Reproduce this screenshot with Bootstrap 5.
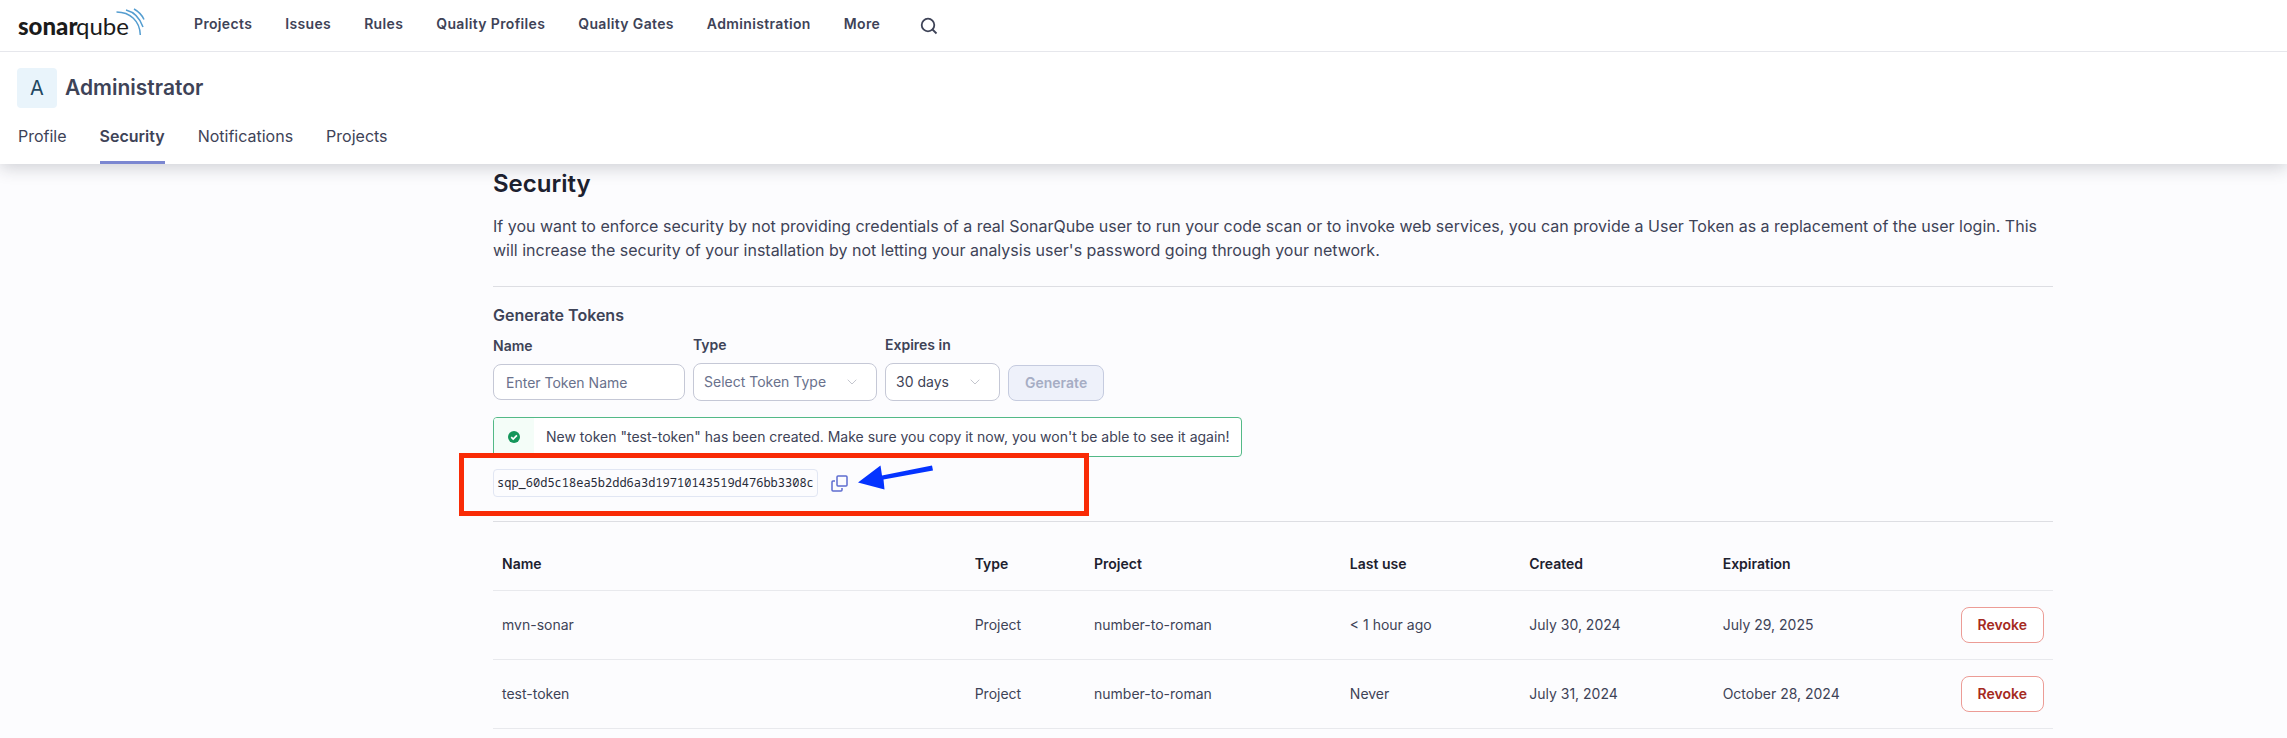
<!DOCTYPE html>
<html lang="en">
<head>
<meta charset="utf-8">
<meta name="viewport" content="width=device-width, initial-scale=1">
<title>Security - Administrator</title>
<link href="https://cdn.jsdelivr.net/npm/bootstrap@5.3.0/dist/css/bootstrap.min.css" rel="stylesheet">
<style>
  body { font-family: Inter, "Liberation Sans", sans-serif; font-size: 14px; line-height: 20px; color: #3e4357; background: #fcfcfe; }
  a { color: inherit; text-decoration: none; }
  .top-bar { height: 52px; background: #fff; border-bottom: 1px solid #e6e7ec; padding: 0 18px; position: relative; z-index: 2; }
  .brand-logo { width: 128px; height: 36px; margin-right: 48px; }
  .main-menu { gap: 33px; font-weight: 600; letter-spacing: .025em; padding-bottom: 4px; }
  .search-btn { margin-left: 40px; }
  .account-head { background: #fff; padding: 16px 17px 0; box-shadow: 0 4px 16px rgba(30,33,50,.2); position: relative; z-index: 1; }
  .avatar-box { width: 40px; height: 40px; border-radius: 4px; background: #e9f4fb; color: #1f4760; font-size: 20px; }
  .account-name { font-size: 21px; line-height: 28px; font-weight: 600; }
  .account-tabs { gap: 33px; font-size: 16px; line-height: 24px; margin-top: 16px; padding-left: 1px; }
  .account-tabs a { height: 40px; border-bottom: 3px solid transparent; display: block; }
  .account-tabs a.active { font-weight: 600; border-color: #7b87d1; }
  .page-grid { display: grid; grid-template-columns: minmax(0,493fr) minmax(0,1560fr) minmax(0,234fr); }
  .page-body { grid-column: 2; padding-top: 4px; }
  .page-title { font-size: 24px; line-height: 32px; font-weight: 600; color: #1d212f; margin: 0 0 14px; }
  .intro { font-size: 16px; line-height: 24px; margin: 0 0 24px; }
  .rule { height: 1px; background: #dddee3; }
  .form-title { font-size: 16px; line-height: 24px; font-weight: 600; margin: 16px 0 8px; }
  .token-form { gap: 8px; }
  .token-form label { display: block; font-weight: 600; margin-bottom: 8px; }
  .field { display: block; height: 38px; border: 1px solid #c5c8d6; border-radius: 8px; background-color: #fff; color: #3e4357; outline: none; padding: 0 10px; }
  input.field { width: 192px; height: 36px; padding: 0 12px; }
  .field::placeholder { color: #69718c; opacity: 1; }
  select.field { appearance: none; background-repeat: no-repeat; background-position: right 19px center;
    background-image: url("data:image/svg+xml,%3Csvg xmlns='http://www.w3.org/2000/svg' width='10' height='6'%3E%3Cpath d='M.7.7 5 5 9.300.7' fill='none' stroke='%23c4c6ce'/%3E%3C/svg%3E"); }
  .pick-type { width: 184px; }
  select.pick-type { color: #69718c; }
  .pick-days { width: 115px; }
  .btn-act { font-size: 14px; line-height: 20px; font-weight: 600; height: 36px; padding: 0 16px; border-radius: 8px; }
  .btn-make, .btn-make:disabled { color: #a6adc4; background: #eef1fa; border-color: #c5cbdf; opacity: 1; }
  .btn-revoke { color: #a52a21; background: #fff; border-color: #ec9c96; }
  .notice { display: inline-flex; height: 40px; margin-top: 16px; border: 1px solid #53b987; border-radius: 4px; background: #fff; overflow: hidden; padding-right: 11px; }
  .notice-mark { width: 40px; background: #f4fdf8; margin-right: 12px; }
  .token-row { position: relative; height: 28px; margin: 12px 0 24px; gap: 13px; }
  .token-code { font-family: "Noto Sans Mono", "DejaVu Sans Mono", monospace; font-size: 12px; line-height: 26px; color: #272b38; border: 1px solid #e1e6f3; border-radius: 4px; padding: 0 3px; }
  .mark-box { position: absolute; left: -34px; top: -16px; width: 630px; height: 63px; border: 5px solid #f92b06; pointer-events: none; }
  .mark-arrow { position: absolute; left: 365px; top: -5px; pointer-events: none; }
  .token-table { width: 100%; table-layout: fixed; }
  .token-table th { height: 68px; padding: 16px 9px 0; font-weight: 600; color: #1d212f; border-bottom: 1px solid #e8e9ed; vertical-align: middle; }
  .token-table td { height: 69px; padding: 0 9px; border-bottom: 1px solid #e8e9ed; vertical-align: middle; }
  .col-name { width: 30.3%; }
  .col-type { width: 7.65%; }
  .col-project { width: 16.4%; }
  .col-used { width: 11.5%; }
  .col-created { width: 12.4%; }
  .col-expires { width: 11.7%; }
</style>
</head>
<body>
<nav class="top-bar d-flex align-items-center">
  <a class="brand-logo" href="#" aria-label="sonarqube">
    <svg width="128" height="36" viewBox="0 0 128 36">
      <g font-family="Lato, sans-serif" font-size="24" fill="#1b1b1b">
        <text x="0" y="27" font-weight="900">sonar</text>
        <text x="58" y="27" font-weight="400">qube</text>
      </g>
      <g fill="none" stroke="#549dd0" stroke-width="1.5">
        <path d="M98.500 4C112 4 122 13 122.300 27"/>
        <path d="M108 2C116 4 122 10.500 125 19"/>
        <path d="M116 1C120.500 3.500 124 7 126 11.500"/>
      </g>
    </svg>
  </a>
  <div class="main-menu d-flex align-items-center">
    <a href="#">Projects</a><a href="#">Issues</a><a href="#">Rules</a><a href="#">Quality Profiles</a><a href="#">Quality Gates</a><a href="#">Administration</a><a href="#">More</a>
  </div>
  <button class="btn search-btn p-0 border-0 d-flex" type="button" aria-label="Search">
    <svg width="18" height="18" viewBox="0 0 18 18" fill="none" stroke="#3e4357" stroke-width="1.800"><circle cx="8" cy="8" r="6.300"/><path d="m12.500 12.500 4 4"/></svg>
  </button>
</nav>

<header class="account-head">
  <div class="d-flex align-items-center gap-2">
    <div class="avatar-box d-flex align-items-center justify-content-center">A</div>
    <div class="account-name">Administrator</div>
  </div>
  <nav class="account-tabs d-flex">
    <a href="#">Profile</a><a href="#" class="active">Security</a><a href="#">Notifications</a><a href="#">Projects</a>
  </nav>
</header>

<main class="page-grid">
  <div class="page-body">
    <h1 class="page-title">Security</h1>
    <p class="intro">If you want to enforce security by not providing credentials of a real SonarQube user to run your code scan or to invoke web services, you can provide a User Token as a replacement of the user login. This will increase the security of your installation by not letting your analysis user's password going through your network.</p>
    <div class="rule"></div>
    <h2 class="form-title">Generate Tokens</h2>
    <form class="token-form d-flex align-items-end">
      <div class="align-self-center"><label for="token-name">Name</label><input class="field" id="token-name" type="text" placeholder="Enter Token Name"></div>
      <div><label for="token-type">Type</label><select class="field pick-type" id="token-type"><option>Select Token Type</option></select></div>
      <div><label for="token-days">Expires in</label><select class="field pick-days" id="token-days"><option>30 days</option></select></div>
      <button class="btn btn-act btn-make" type="submit" disabled>Generate</button>
    </form>
    <div class="notice align-items-center" role="alert">
      <div class="notice-mark h-100 d-flex align-items-center justify-content-center">
        <svg width="12" height="12" viewBox="0 0 12 12"><circle cx="6" cy="6" r="6" fill="#14965a"/><path d="m3.200 6.200 2 1.900L8.900 4.300" fill="none" stroke="#fff" stroke-width="1.700"/></svg>
      </div>
      <div>New token "test-token" has been created. Make sure you copy it now, you won't be able to see it again!</div>
    </div>
    <div class="token-row d-flex align-items-center">
      <code class="token-code">sqp_60d5c18ea5b2dd6a3d19710143519d476bb3308c</code>
      <button class="btn p-0 border-0 d-flex" type="button" aria-label="Copy to clipboard">
        <svg width="17" height="17" viewBox="0 0 17 17" fill="none" stroke="#5d6cd0" stroke-width="1.500"><rect x="6" y="1" width="10" height="10" rx="1"/><path d="M4 6H2a1 1 0 0 0-1 1v8a1 1 0 0 0 1 1h8a1 1 0 0 0 1-1v-2"/></svg>
      </button>
      <div class="mark-box"></div>
      <svg class="mark-arrow" width="76" height="28" viewBox="0 0 76 28" fill="#0433ff"><path d="M0 18.500 22.500 1.500 24 11.500 74 1.500 75 6.500 25.500 15.500 26.500 25.500Z"/></svg>
    </div>
    <div class="rule"></div>
    <table class="token-table">
      <colgroup><col class="col-name"><col class="col-type"><col class="col-project"><col class="col-used"><col class="col-created"><col class="col-expires"><col></colgroup>
      <thead><tr><th>Name</th><th>Type</th><th>Project</th><th>Last use</th><th>Created</th><th>Expiration</th><th></th></tr></thead>
      <tbody>
        <tr><td>mvn-sonar</td><td>Project</td><td>number-to-roman</td><td>&lt; 1 hour ago</td><td>July 30, 2024</td><td>July 29, 2025</td><td class="text-end"><button class="btn btn-act btn-revoke" type="button">Revoke</button></td></tr>
        <tr><td>test-token</td><td>Project</td><td>number-to-roman</td><td>Never</td><td>July 31, 2024</td><td>October 28, 2024</td><td class="text-end"><button class="btn btn-act btn-revoke" type="button">Revoke</button></td></tr>
      </tbody>
    </table>
  </div>
</main>
<script src="https://cdn.jsdelivr.net/npm/bootstrap@5.3.0/dist/js/bootstrap.bundle.min.js"></script>
</body>
</html>
